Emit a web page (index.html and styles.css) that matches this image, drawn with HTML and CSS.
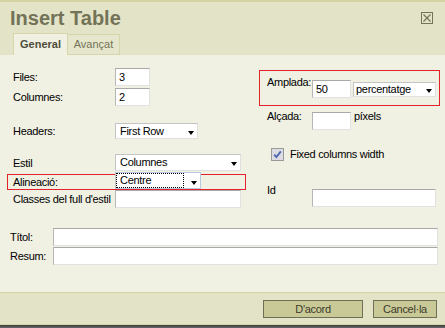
FILE: index.html
```html
<!DOCTYPE html>
<html>
<head>
<meta charset="utf-8">
<link rel="stylesheet" href="styles.css">
</head>
<body>
<div class="dialog">
  <div class="header">
    <div class="title-row">
      <h1 class="title">Insert Table</h1>
      <span class="close"><svg width="12" height="12" viewBox="0 0 12 12"><rect x="0.5" y="0.5" width="11" height="11" fill="none" stroke="#737357"/><path d="M2.5 2.5 L9.5 9.5 M9.5 2.5 L2.5 9.5" stroke="#737357" stroke-width="1.1"/></svg></span>
    </div>
    <div class="tabs">
      <div class="tab active">General</div>
      <div class="tab">Avançat</div>
    </div>
  </div>
  <div class="content">
    <div class="columns">
      <div class="col-left">
        <div class="row"><span class="lbl">Files:</span><input class="inp w-small" value="3"></div>
        <div class="row mt2"><span class="lbl">Columnes:</span><input class="inp w-small" value="2"></div>
        <div class="row mt17"><span class="lbl">Headers:</span><div class="sel w-headers">First Row<span class="arrow"></span></div></div>
        <div class="row mt15"><span class="lbl">Estil</span><div class="sel w-estil tall">Columnes<span class="arrow"></span></div></div>
        <div class="row hl-row"><span class="lbl lbl-hl">Alineació:</span><div class="sel w-align focus"><span class="focus-text">Centre</span><span class="arrow"></span></div></div>
        <div class="row"><span class="lbl">Classes del full d'estil</span><input class="inp w-wide" value=""></div>
      </div>
      <div class="col-right">
        <div class="hl-box">
          <span class="rlbl rlbl-up">Amplada:</span><input class="inp w-num" value="50"><div class="sel w-unit">percentatge<span class="arrow"></span></div>
        </div>
        <div class="rrow mt6"><span class="rlbl rlbl-up2">Alçada:</span><input class="inp w-num" value=""><span class="unit">píxels</span></div>
        <div class="check-row"><span class="checkbox"><svg width="11" height="11" viewBox="0 0 11 11"><path d="M2.2 5.6 L4.4 8 L8.8 2.4" fill="none" stroke="#4a66b4" stroke-width="1.8"/></svg></span><span class="check-label">Fixed columns width</span></div>
        <div class="rrow id-row"><span class="rlbl rlbl-id">Id</span><input class="inp w-id" value=""></div>
      </div>
    </div>
    <div class="wrow first"><span class="wlbl">Títol:</span><input class="inp w-full" value=""></div>
    <div class="wrow second"><span class="wlbl">Resum:</span><input class="inp w-full" value=""></div>
  </div>
  <div class="footer">
    <button class="btn btn-ok">D'acord</button>
    <button class="btn btn-cancel">Cancel·la</button>
  </div>
  <div class="shadow"></div>
</div>
</body>
</html>
```

FILE: styles.css
```css
html, body {
  margin: 0;
  padding: 0;
  background: #f0f0e3;
}
.dialog {
  width: 445px;
  height: 328px;
  font-family: "Liberation Sans", Arial, sans-serif;
  font-size: 11px;
  letter-spacing: -0.3px;
  color: #000;
  overflow: hidden;
}
.header {
  background: #e3e3c8;
  border-top: 2px solid #d3d3a4;
  padding-top: 5px;
  height: 53px;
  box-sizing: content-box;
}
.header {
  height: auto;
}
.title-row {
  display: flex;
  justify-content: space-between;
  align-items: flex-start;
  height: 22px;
  padding-left: 10px;
  padding-right: 12px;
}
.title {
  margin: 0;
  font-size: 20px;
  line-height: 22px;
  font-weight: bold;
  letter-spacing: 0;
  color: #737357;
}
.close {
  display: block;
  width: 12px;
  height: 12px;
  margin-top: 5px;
}
.close svg { display: block; }
.tabs {
  display: flex;
  align-items: flex-start;
  margin-top: 4px;
  padding-left: 13px;
  height: 22px;
}
.tab {
  box-sizing: border-box;
  letter-spacing: 0;
  text-align: center;
}
.tab.active {
  width: 55px;
  height: 22px;
  background: #f0f0e3;
  border: 1px solid #d6d6aa;
  border-bottom: none;
  font-weight: bold;
  color: #4d4d3c;
  line-height: 21px;
}
.tab:not(.active) {
  width: 52px;
  height: 21px;
  margin-top: 1px;
  background: #e6e6cd;
  border: 1px solid #d6d6aa;
  border-left: none;
  color: #737357;
  line-height: 19px;
}
.content {
  height: 237px;
  background: #f0f0e3;
}
.columns {
  display: flex;
  align-items: flex-start;
}
.col-left {
  width: 245px;
  box-sizing: border-box;
  padding-left: 13px;
  padding-top: 13px;
}
.row {
  display: flex;
  align-items: center;
}
.mt2 { margin-top: 2px; }
.mt17 { margin-top: 17px; }
.mt15 { margin-top: 15px; }
.mt6 { margin-top: 6px; }
.lbl {
  width: 102px;
  flex: none;
  white-space: nowrap;
  line-height: 14px;
}
.inp {
  box-sizing: border-box;
  height: 18px;
  margin: 0;
  padding: 0 0 0 3px;
  font-family: "Liberation Sans", Arial, sans-serif;
  font-size: 11px;
  letter-spacing: -0.3px;
  color: #000;
  background: #fff;
  border: 1px solid;
  border-color: #a9a9a9 #e2e2e2 #e2e2e2 #b6b6b6;
  outline: none;
}
.w-small { width: 35px; }
.w-wide { width: 126px; }
.w-num { width: 39px; }
.w-id { width: 124px; }
.w-full { width: 385px; }
.sel {
  position: relative;
  box-sizing: border-box;
  height: 16px;
  background: #fff;
  border: 1px solid;
  border-color: #c4c4c4 #e0e0e0 #e0e0e0 #c4c4c4;
  padding-left: 4px;
  line-height: 14px;
  white-space: nowrap;
}
.sel.tall { height: 17px; line-height: 15px; }
.w-headers { width: 83px; }
.w-estil { width: 126px; }
.w-align { width: 86px; }
.w-unit { width: 83px; height: 15px; line-height: 13px; margin-left: 2px; margin-top: 2px; padding-left: 2px; }
.arrow {
  position: absolute;
  right: 3px;
  top: 7px;
  width: 0;
  height: 0;
  border-left: 3.5px solid transparent;
  border-right: 3.5px solid transparent;
  border-top: 4px solid #000;
}
.w-unit .arrow { top: 6px; }
.hl-row {
  box-sizing: border-box;
  height: 16px;
  margin-top: 3px;
  margin-left: -6px;
  width: 239px;
  padding-left: 5px;
  border: 1px solid #e4222b;
  align-items: flex-start;
}
.lbl-hl { margin-top: 0; }
.sel.focus {
  height: 17px;
  margin-top: -3px;
  border-color: #b7cbe0 #b7cbe0 #b7cbe0 #c4c4c4;
  padding-left: 0;
  line-height: 15px;
}
.focus-text {
  display: block;
  box-sizing: border-box;
  width: 68px;
  height: 15px;
  padding-left: 3px;
  border: 1px dotted #000;
  line-height: 13px;
}
.sel.focus .arrow { top: 8px; right: 3px; }
.col-right {
  padding-top: 15px;
  margin-left: 14px;
  width: 181px;
}
.hl-box {
  box-sizing: border-box;
  width: 181px;
  height: 36px;
  border: 1px solid #e4222b;
  padding: 9px 0 0 7px;
  display: flex;
  align-items: flex-start;
}
.rlbl {
  width: 45px;
  flex: none;
  line-height: 13px;
  white-space: nowrap;
}
.rlbl-up { margin-top: -4px; }
.rrow {
  display: flex;
  align-items: flex-start;
  padding-left: 8px;
}
.rlbl-up2 { margin-top: -2px; }
.unit {
  margin-left: 3px;
  margin-top: -2px;
  line-height: 13px;
}
.check-row {
  display: flex;
  align-items: center;
  margin-top: 18px;
  padding-left: 12px;
  height: 13px;
}
.checkbox {
  box-sizing: border-box;
  width: 13px;
  height: 13px;
  border: 1px solid #9a9a9a;
  background: #dcdce2;
  display: flex;
  align-items: center;
  justify-content: center;
}
.checkbox svg { display: block; }
.check-label {
  margin-left: 6px;
  line-height: 13px;
}
.id-row { margin-top: 28px; }
.rlbl-id { margin-top: -5px; }
.wrow {
  display: flex;
  align-items: center;
  padding-left: 10px;
}
.wrow.first { margin-top: 20px; }
.wrow.second { margin-top: 1px; }
.wlbl {
  width: 43px;
  flex: none;
  line-height: 14px;
}
.footer {
  box-sizing: border-box;
  height: 33px;
  background: #e3e3c8;
  border-top: 1px solid #d3d3a4;
  border-bottom: 1px solid #d6d6aa;
  display: flex;
  justify-content: flex-end;
  align-items: flex-start;
  padding-top: 7px;
  padding-right: 8px;
  gap: 10px;
}
.btn {
  box-sizing: border-box;
  height: 18px;
  margin: 0;
  padding: 0;
  background: #c9c997;
  border: 1px solid #6f6f55;
  font-family: "Liberation Sans", Arial, sans-serif;
  font-size: 11px;
  letter-spacing: -0.3px;
  color: #3b3b2c;
  line-height: 16px;
}
.btn-ok { width: 100px; }
.btn-cancel { width: 64px; }
.shadow {
  height: 3px;
  background: linear-gradient(#3c3c3c, #6a6a6a);
}
```
